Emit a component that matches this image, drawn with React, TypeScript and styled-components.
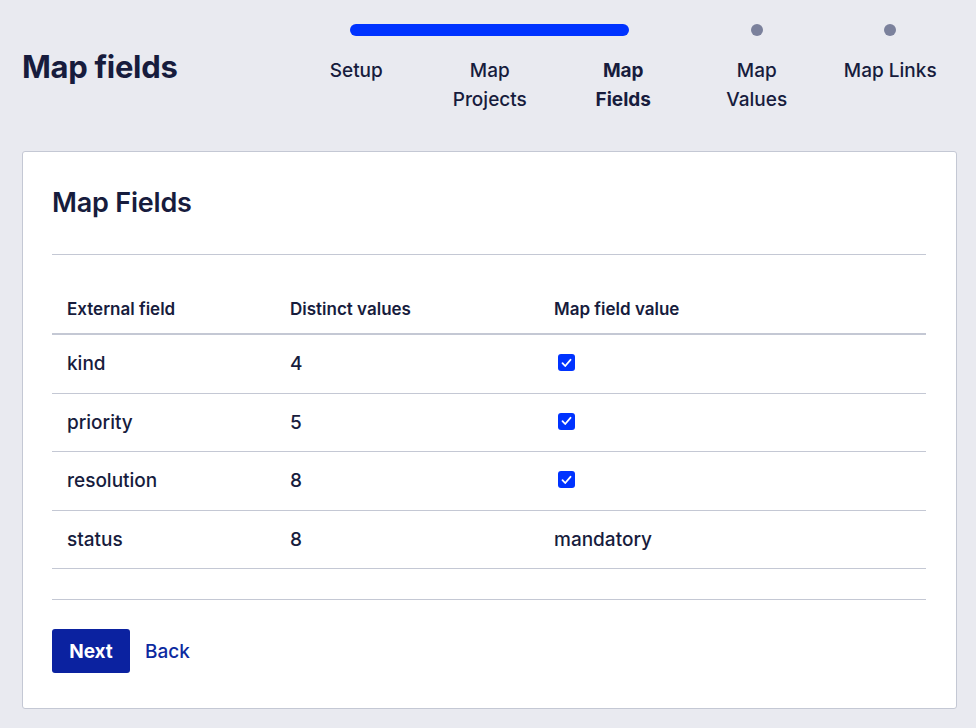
import styled, { createGlobalStyle } from "styled-components";

const GlobalStyle = createGlobalStyle`
  html, body {
    margin: 0;
    padding: 0;
    background: #e9eaf0;
  }
  body {
    font-family: Inter, "Noto Sans", sans-serif;
    color: #171c3d;
  }
`;

interface StepData {
  label: string[];
}

const steps: StepData[] = [
  { label: ["Setup"] },
  { label: ["Map", "Projects"] },
  { label: ["Map", "Fields"] },
  { label: ["Map", "Values"] },
  { label: ["Map Links"] },
];

const current = 2;

const rows = [
  { field: "kind", distinct: 4, mapped: true },
  { field: "priority", distinct: 5, mapped: true },
  { field: "resolution", distinct: 8, mapped: true },
  { field: "status", distinct: 8, mapped: "mandatory" },
];

const Page = styled.div`
  padding: 0 19px 20px 22px;
`;

const Header = styled.header`
  display: flex;
  justify-content: space-between;
  align-items: flex-start;
`;

const Title = styled.h1`
  margin: 47px 0 0;
  font-size: 31px;
  line-height: 40px;
  font-weight: 700;
  letter-spacing: -0.3px;
`;

const Tracker = styled.ol`
  list-style: none;
  margin: 24px 0 0;
  padding: 0;
  display: grid;
  grid-template-columns: repeat(5, 133.5px);
`;

const Step = styled.li`
  display: flex;
  flex-direction: column;
  align-items: center;
`;

const Track = styled.div`
  width: 100%;
  height: 12px;
  display: flex;
  justify-content: center;
`;

const Fill = styled.div<{ $left: boolean; $right: boolean }>`
  flex: 1;
  height: 12px;
  background: #0033ff;
  margin-left: ${(p) => (p.$left ? "calc(50% - 6px)" : "0")};
  margin-right: ${(p) => (p.$right ? "calc(50% - 6px)" : "0")};
  border-radius: ${(p) =>
    `${p.$left ? "6px" : "0"} ${p.$right ? "6px" : "0"} ${p.$right ? "6px" : "0"} ${p.$left ? "6px" : "0"}`};
`;

const Dot = styled.div`
  width: 12px;
  height: 12px;
  border-radius: 50%;
  background: #7b819c;
`;

const StepLabel = styled.div<{ $active: boolean }>`
  margin-top: 20px;
  font-size: 19px;
  line-height: 29px;
  text-align: center;
  font-weight: ${(p) => (p.$active ? 700 : 500)};
`;

const Card = styled.section`
  margin-top: 37px;
  background: #fff;
  border: 1px solid #c4c8d4;
  border-radius: 3px;
  padding: 33px 30px 35px 29px;
`;

const CardTitle = styled.h2`
  margin: 0;
  font-size: 27px;
  line-height: 36px;
  font-weight: 600;
  letter-spacing: -0.2px;
`;

const Rule = styled.hr`
  border: none;
  border-top: 1px solid #c4c8d4;
  margin: 33px 0 30px;
`;

const Table = styled.table`
  width: 100%;
  border-collapse: collapse;
  table-layout: fixed;
`;

const Th = styled.th<{ $w?: number }>`
  box-sizing: border-box;
  text-align: left;
  font-size: 17px;
  line-height: 24px;
  font-weight: 600;
  padding: 12px 15px 12px;
  border-bottom: 2px solid #c4c8d4;
  width: ${(p) => (p.$w ? `${p.$w}px` : "auto")};
`;

const Td = styled.td`
  font-size: 19px;
  line-height: 25.5px;
  font-weight: 500;
  padding: 16px 15px;
  border-bottom: 1px solid #c4c8d4;
  vertical-align: middle;
`;

const Check = styled.span`
  display: inline-flex;
  align-items: center;
  justify-content: center;
  width: 17px;
  height: 17px;
  margin: 3px 0 0 4px;
  border-radius: 3px;
  background: #0033ff;
  vertical-align: top;
`;

const Footer = styled.div`
  margin-top: 30px;
  padding-top: 29px;
  border-top: 1px solid #c4c8d4;
  display: flex;
  align-items: center;
  gap: 15px;
`;

const Button = styled.button`
  height: 44px;
  width: 78px;
  padding: 0;
  border: none;
  border-radius: 3px;
  background: #0b22a0;
  color: #fff;
  font-family: inherit;
  font-size: 19px;
  font-weight: 700;
  cursor: pointer;
`;

const LinkButton = styled.a`
  color: #0c2aa0;
  font-size: 19px;
  font-weight: 500;
  text-decoration: none;
  cursor: pointer;
`;

const CheckMark = () => (
  <svg width="11" height="10" viewBox="0 0 11 10" fill="none">
    <path d="M1.5 5.2 L4.2 8 L9.5 1.8" stroke="#fff" strokeWidth="1.8" strokeLinecap="round" strokeLinejoin="round" />
  </svg>
);

export default function App() {
  return (
    <Page>
      <GlobalStyle />
      <Header>
        <Title>Map fields</Title>
        <Tracker>
          {steps.map((s, i) => {
            const fillLeft = i > 0 && i <= current;
            const fillRight = i < current;
            return (
              <Step key={s.label.join(" ")}>
                <Track>
                  {fillLeft || fillRight ? (
                    <Fill $left={!fillLeft} $right={!fillRight} />
                  ) : (
                    <Dot />
                  )}
                </Track>
                <StepLabel $active={i === current}>
                  {s.label.map((l) => (
                    <div key={l}>{l}</div>
                  ))}
                </StepLabel>
              </Step>
            );
          })}
        </Tracker>
      </Header>

      <Card>
        <CardTitle>Map Fields</CardTitle>
        <Rule />
        <Table>
          <thead>
            <tr>
              <Th $w={223}>External field</Th>
              <Th $w={264}>Distinct values</Th>
              <Th>Map field value</Th>
            </tr>
          </thead>
          <tbody>
            {rows.map((r) => (
              <tr key={r.field}>
                <Td>{r.field}</Td>
                <Td>{r.distinct}</Td>
                <Td>
                  {r.mapped === true ? (
                    <Check>
                      <CheckMark />
                    </Check>
                  ) : (
                    r.mapped
                  )}
                </Td>
              </tr>
            ))}
          </tbody>
        </Table>
        <Footer>
          <Button>Next</Button>
          <LinkButton>Back</LinkButton>
        </Footer>
      </Card>
    </Page>
  );
}
